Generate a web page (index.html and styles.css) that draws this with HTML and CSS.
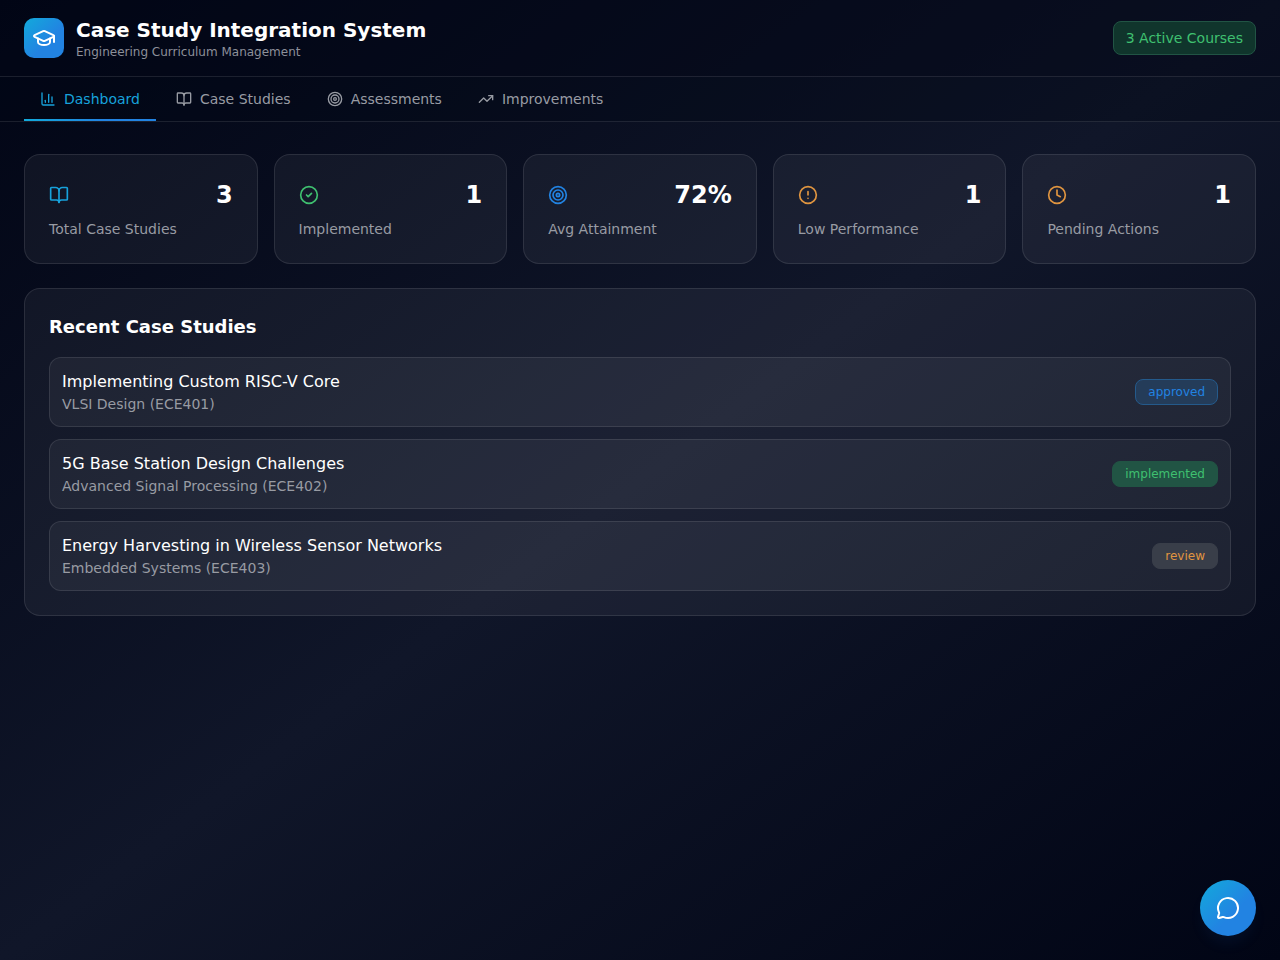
FILE: index.html
```html
<!DOCTYPE html>
<html lang="en">
<head>
  <meta charset="UTF-8">
  <title>Case Study Integration System</title>
  <link rel="stylesheet" href="styles.css">
</head>
<body>
  <header class="header">
    <div class="brand">
      <div class="logo">
        <svg class="icon" width="24" height="24" viewBox="0 0 24 24">
          <path d="M21.42 10.922a1 1 0 0 0-.019-1.838L12.83 5.18a2 2 0 0 0-1.66 0L2.6 9.08a1 1 0 0 0 0 1.832l8.57 3.908a2 2 0 0 0 1.66 0z"/>
          <path d="M22 10v6"/>
          <path d="M6 12.5V16a6 3 0 0 0 12 0v-3.5"/>
        </svg>
      </div>
      <div>
        <h1>Case Study Integration System</h1>
        <p class="subtitle">Engineering Curriculum Management</p>
      </div>
    </div>
    <span class="courses-badge">3 Active Courses</span>
  </header>

  <nav class="tabs">
    <button class="tab active">
      <svg class="icon" width="16" height="16" viewBox="0 0 24 24"><path d="M3 3v16a2 2 0 0 0 2 2h16"/><path d="M18 17V9"/><path d="M13 17V5"/><path d="M8 17v-3"/></svg>
      Dashboard
    </button>
    <button class="tab">
      <svg class="icon" width="16" height="16" viewBox="0 0 24 24"><path d="M12 7v14"/><path d="M3 18a1 1 0 0 1-1-1V4a1 1 0 0 1 1-1h5a4 4 0 0 1 4 4 4 4 0 0 1 4-4h5a1 1 0 0 1 1 1v13a1 1 0 0 1-1 1h-6a3 3 0 0 0-3 3 3 3 0 0 0-3-3z"/></svg>
      Case Studies
    </button>
    <button class="tab">
      <svg class="icon" width="16" height="16" viewBox="0 0 24 24"><circle cx="12" cy="12" r="10"/><circle cx="12" cy="12" r="6"/><circle cx="12" cy="12" r="2"/></svg>
      Assessments
    </button>
    <button class="tab">
      <svg class="icon" width="16" height="16" viewBox="0 0 24 24"><path d="M16 7h6v6"/><path d="m22 7-8.5 8.5-5-5L2 17"/></svg>
      Improvements
    </button>
  </nav>

  <main class="content">
    <section class="stats">
      <div class="card stat">
        <div class="stat-top">
          <svg class="icon cyan" width="20" height="20" viewBox="0 0 24 24"><path d="M12 7v14"/><path d="M3 18a1 1 0 0 1-1-1V4a1 1 0 0 1 1-1h5a4 4 0 0 1 4 4 4 4 0 0 1 4-4h5a1 1 0 0 1 1 1v13a1 1 0 0 1-1 1h-6a3 3 0 0 0-3 3 3 3 0 0 0-3-3z"/></svg>
          <span class="stat-value">3</span>
        </div>
        <p class="stat-label">Total Case Studies</p>
      </div>
      <div class="card stat">
        <div class="stat-top">
          <svg class="icon green" width="20" height="20" viewBox="0 0 24 24"><circle cx="12" cy="12" r="10"/><path d="m9 12 2 2 4-4"/></svg>
          <span class="stat-value">1</span>
        </div>
        <p class="stat-label">Implemented</p>
      </div>
      <div class="card stat">
        <div class="stat-top">
          <svg class="icon blue" width="20" height="20" viewBox="0 0 24 24"><circle cx="12" cy="12" r="10"/><circle cx="12" cy="12" r="6"/><circle cx="12" cy="12" r="2"/></svg>
          <span class="stat-value">72%</span>
        </div>
        <p class="stat-label">Avg Attainment</p>
      </div>
      <div class="card stat">
        <div class="stat-top">
          <svg class="icon orange" width="20" height="20" viewBox="0 0 24 24"><circle cx="12" cy="12" r="10"/><path d="M12 8v4"/><path d="M12 16h.01"/></svg>
          <span class="stat-value">1</span>
        </div>
        <p class="stat-label">Low Performance</p>
      </div>
      <div class="card stat">
        <div class="stat-top">
          <svg class="icon orange" width="20" height="20" viewBox="0 0 24 24"><circle cx="12" cy="12" r="10"/><path d="M12 6v6l4 2"/></svg>
          <span class="stat-value">1</span>
        </div>
        <p class="stat-label">Pending Actions</p>
      </div>
    </section>

    <section class="card recent">
      <h2>Recent Case Studies</h2>
      <div class="study-list">
        <div class="study">
          <div>
            <p class="study-title">Implementing Custom RISC-V Core</p>
            <p class="study-course">VLSI Design (ECE401)</p>
          </div>
          <span class="status approved">approved</span>
        </div>
        <div class="study">
          <div>
            <p class="study-title">5G Base Station Design Challenges</p>
            <p class="study-course">Advanced Signal Processing (ECE402)</p>
          </div>
          <span class="status implemented">implemented</span>
        </div>
        <div class="study">
          <div>
            <p class="study-title">Energy Harvesting in Wireless Sensor Networks</p>
            <p class="study-course">Embedded Systems (ECE403)</p>
          </div>
          <span class="status review">review</span>
        </div>
      </div>
    </section>
  </main>

  <button class="chat-btn" aria-label="Open chat">
    <svg class="icon" width="24" height="24" viewBox="0 0 24 24"><path d="M2.992 16.342a2 2 0 0 1 .094 1.167l-1.065 3.29a1 1 0 0 0 1.236 1.168l3.413-.998a2 2 0 0 1 1.099.092 10 10 0 1 0-4.777-4.719"/></svg>
  </button>
</body>
</html>
```

FILE: styles.css
```css
* {
  box-sizing: border-box;
}
body {
  margin: 0;
  min-height: 100vh;
  font-family: "DejaVu Sans", sans-serif;
  color: #fff;
  background: linear-gradient(to bottom right, #010515, #101629, #010515);
}
h1, h2, p {
  margin: 0;
}
button {
  font-family: inherit;
  border: none;
  background: none;
  cursor: pointer;
}
.icon {
  display: block;
  flex-shrink: 0;
  fill: none;
  stroke: currentColor;
  stroke-width: 2;
  stroke-linecap: round;
  stroke-linejoin: round;
}
.cyan {
  color: #17a2dc;
}
.green {
  color: #3fc070;
}
.blue {
  color: #2283e2;
}
.orange {
  color: #e09540;
}

/* header */
.header {
  display: flex;
  align-items: center;
  justify-content: space-between;
  height: 77px;
  padding: 0 24px;
  background: rgba(1, 5, 21, 0.5);
  border-bottom: 1px solid rgba(255, 255, 255, 0.1);
}
.brand {
  display: flex;
  align-items: center;
  gap: 12px;
}
.logo {
  display: flex;
  align-items: center;
  justify-content: center;
  width: 40px;
  height: 40px;
  border-radius: 10px;
  background: linear-gradient(135deg, #12aadb, #2283e2 60%);
}
h1 {
  font-size: 20px;
  line-height: 28px;
}
.subtitle {
  font-size: 12px;
  line-height: 16px;
  color: #8d909a;
}
.courses-badge {
  padding: 6px 12px;
  font-size: 14px;
  line-height: 20px;
  color: #3fc070;
  background: #10352c;
  border: 1px solid #215444;
  border-radius: 8px;
}

/* tabs */
.tabs {
  display: flex;
  gap: 4px;
  height: 45px;
  padding: 0 24px;
  background: rgba(1, 5, 21, 0.3);
  border-bottom: 1px solid rgba(255, 255, 255, 0.1);
}
.tab {
  display: flex;
  align-items: center;
  gap: 8px;
  padding: 0 16px;
  font-size: 14px;
  line-height: 20px;
  color: #989ba3;
}
.tab.active {
  color: #17a2dc;
  background: linear-gradient(90deg, #12aadb, #2283e2 60%) bottom / 100% 2px no-repeat;
}

/* dashboard */
.content {
  display: flex;
  flex-direction: column;
  gap: 24px;
  padding: 32px 24px;
}
.card {
  padding: 24px;
  background: rgba(255, 255, 255, 0.05);
  border: 1px solid rgba(255, 255, 255, 0.1);
  border-radius: 16px;
}
.stats {
  display: grid;
  grid-template-columns: repeat(5, 1fr);
  gap: 16px;
}
.stat-top {
  display: flex;
  align-items: center;
  justify-content: space-between;
  margin-bottom: 8px;
}
.stat-value {
  font-size: 24px;
  line-height: 32px;
  font-weight: bold;
}
.stat-label {
  font-size: 14px;
  line-height: 20px;
  color: #989ba3;
}
h2 {
  margin-bottom: 16px;
  font-size: 18px;
  line-height: 28px;
}
.study-list {
  display: flex;
  flex-direction: column;
  gap: 12px;
}
.study {
  display: flex;
  align-items: center;
  justify-content: space-between;
  padding: 12px;
  background: rgba(255, 255, 255, 0.05);
  border: 1px solid rgba(255, 255, 255, 0.1);
  border-radius: 12px;
}
.study-title {
  font-size: 16px;
  line-height: 24px;
}
.study-course {
  font-size: 14px;
  line-height: 20px;
  color: #989ba3;
}
.status {
  padding: 4px 12px;
  font-size: 12px;
  line-height: 16px;
  border: 1px solid;
  border-radius: 8px;
}
.approved {
  color: #2283e2;
  background: #243c59;
  border-color: #245a8b;
}
.implemented {
  color: #3fc070;
  background: #215444;
  border-color: #215444;
}
.review {
  color: #e09540;
  background: #393e49;
  border-color: #393e49;
}

.chat-btn {
  position: fixed;
  right: 24px;
  bottom: 24px;
  display: flex;
  align-items: center;
  justify-content: center;
  width: 56px;
  height: 56px;
  padding: 0;
  color: #fff;
  border-radius: 50%;
  background: linear-gradient(135deg, #12aadb, #2283e2 60%);
  box-shadow: 0 10px 15px -3px rgba(34, 131, 226, 0.08);
}
```
